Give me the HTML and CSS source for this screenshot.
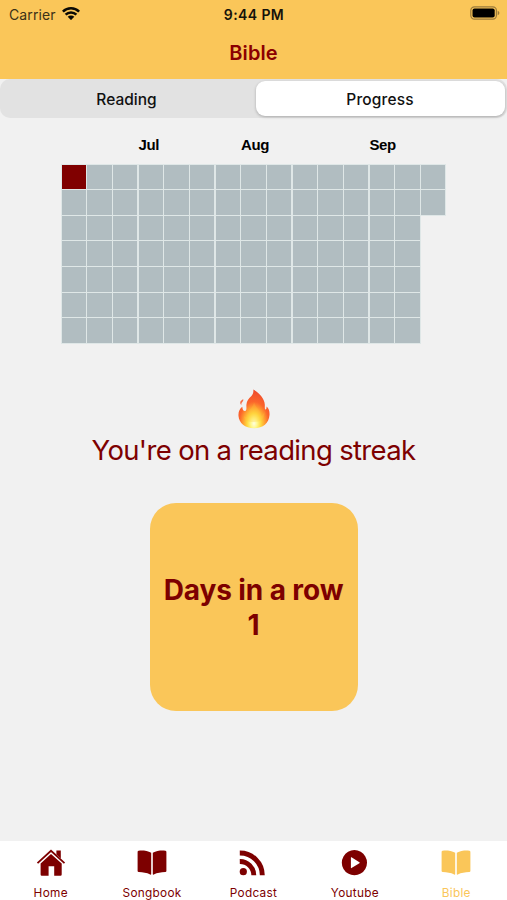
FILE: index.html
```html
<!DOCTYPE html>
<html lang="en">
<head>
    <meta charset="utf-8">
    <title>Bible</title>
    <link rel="stylesheet" href="styles.css">
</head>
<body>
    <header class="header">
        <div class="statusBar">
            <div class="carrier">
                <span class="carrierName">Carrier</span>
                <svg class="wifi" viewBox="0 0 18 13">
                    <path d="M0.9 4.6a11.6 11.6 0 0 1 16.2 0M3.6 7.6a7.7 7.7 0 0 1 10.8 0" fill="none" stroke="#0b0a05" stroke-width="2.5"/>
                    <path d="M5.7 9.8a4.7 4.7 0 0 1 6.6 0L9 13.1z" fill="#0b0a05"/>
                </svg>
            </div>
            <span class="time">9:44 PM</span>
            <svg class="battery" viewBox="0 0 30 14">
                <rect x="0.8" y="0.8" width="25.6" height="12.4" rx="3.6" fill="none" stroke="#9b7b3b" stroke-width="1.2"/>
                <rect x="2.5" y="2.5" width="22.2" height="9" rx="2" fill="#000"/>
                <path d="M27.7 4.8c2.2.8 2.2 3.6 0 4.4z" fill="#9b7b3b"/>
            </svg>
        </div>
        <h1 class="title">Bible</h1>
    </header>

    <div class="segmented">
        <div class="segment"><span class="segmentText">Reading</span></div>
        <div class="segment selected"><span class="segmentText">Progress</span></div>
    </div>

    <main class="content">
        <div class="months">
            <span class="jul">Jul</span>
            <span class="aug">Aug</span>
            <span class="sep">Sep</span>
        </div>
        <!-- one column per week, last week is partial -->
        <div class="heatmap">
            <i class="day read"></i><i class="day"></i><i class="day"></i><i class="day"></i><i class="day"></i><i class="day"></i><i class="day"></i>
            <i class="day"></i><i class="day"></i><i class="day"></i><i class="day"></i><i class="day"></i><i class="day"></i><i class="day"></i>
            <i class="day"></i><i class="day"></i><i class="day"></i><i class="day"></i><i class="day"></i><i class="day"></i><i class="day"></i>
            <i class="day"></i><i class="day"></i><i class="day"></i><i class="day"></i><i class="day"></i><i class="day"></i><i class="day"></i>
            <i class="day"></i><i class="day"></i><i class="day"></i><i class="day"></i><i class="day"></i><i class="day"></i><i class="day"></i>
            <i class="day"></i><i class="day"></i><i class="day"></i><i class="day"></i><i class="day"></i><i class="day"></i><i class="day"></i>
            <i class="day"></i><i class="day"></i><i class="day"></i><i class="day"></i><i class="day"></i><i class="day"></i><i class="day"></i>
            <i class="day"></i><i class="day"></i><i class="day"></i><i class="day"></i><i class="day"></i><i class="day"></i><i class="day"></i>
            <i class="day"></i><i class="day"></i><i class="day"></i><i class="day"></i><i class="day"></i><i class="day"></i><i class="day"></i>
            <i class="day"></i><i class="day"></i><i class="day"></i><i class="day"></i><i class="day"></i><i class="day"></i><i class="day"></i>
            <i class="day"></i><i class="day"></i><i class="day"></i><i class="day"></i><i class="day"></i><i class="day"></i><i class="day"></i>
            <i class="day"></i><i class="day"></i><i class="day"></i><i class="day"></i><i class="day"></i><i class="day"></i><i class="day"></i>
            <i class="day"></i><i class="day"></i><i class="day"></i><i class="day"></i><i class="day"></i><i class="day"></i><i class="day"></i>
            <i class="day"></i><i class="day"></i><i class="day"></i><i class="day"></i><i class="day"></i><i class="day"></i><i class="day"></i>
            <i class="day"></i><i class="day"></i>
        </div>

        <svg class="flame" viewBox="0 0 32 40">
            <defs>
                <radialGradient id="fire" gradientUnits="userSpaceOnUse" cx="16" cy="34.5" r="34" gradientTransform="translate(16 0) scale(.68 1) translate(-16 0)">
                    <stop offset="0" stop-color="#fffee0"/>
                    <stop offset="0.14" stop-color="#fff88a"/>
                    <stop offset="0.3" stop-color="#ffd83e"/>
                    <stop offset="0.46" stop-color="#ffa231"/>
                    <stop offset="0.64" stop-color="#fb652b"/>
                    <stop offset="1" stop-color="#ee482d"/>
                </radialGradient>
            </defs>
            <path d="M15.3 0.5C21 4 26.5 9 26.8 15.5C27 18 26.4 20 27.5 20.5C28.5 20.5 28.5 19 28.6 17.6C31 19.5 31.7 22.5 31.5 26C31 34 25 39.3 16 39.3C7 39.3 1 34 .5 27C.2 22.8 1.5 20 4.3 17.8C4.5 20.2 5 22 7 22C9 21.7 8.3 18.5 8.4 16C8.6 12 10.6 9.6 13.2 7.3C15 5.5 15.7 3 15.3 .5Z" fill="url(#fire)"/>
            <path d="M16 13C18 20 23 21 23 27C25 26 26 24 26.5 22C27 30 23 33 16 33C9 33 6 31 6 27C8 29 10 28 10.5 24C11 20 15.5 18 16 13Z" fill="#ffc93c" opacity=".25"/>
            <path d="M5.2 10.3C6 12.5 2.8 13.3 3.4 16.2C1.3 13.8 2.3 11.7 5.2 10.3Z" fill="#f66a42"/>
        </svg>
        <p class="streak">You're on a reading streak</p>

        <div class="card">
            <span class="cardLabel">Days in a row</span>
            <span class="cardValue">1</span>
        </div>
    </main>

    <nav class="tabBar">
        <div class="tab">
            <svg class="tabIcon" viewBox="0 0 30 28">
                <path d="M15 5L25.7 14.5V25.6Q25.7 26.8 24.5 26.8H18.2V17.2H12.6V26.8H5.8Q4.6 26.8 4.6 25.6V14.5Z"/>
                <path d="M1.5 14.1L15 1.8L28.5 14.1" fill="none" stroke="currentColor" stroke-width="1.8"/>
                <path d="M20.4 1.4H24.8V9.6L20.4 5.6Z"/>
            </svg>
            <span class="tabLabel">Home</span>
        </div>
        <div class="tab">
            <svg class="tabIcon" viewBox="0 0 30 28">
                <path d="M14.2 3.8C10.5 1.7 6 1.4 1.7 1.7Q.6 1.8.6 2.9V22Q.6 23.1 1.8 23.1C6.1 23.4 9.6 23.7 13.2 25.5Q14.2 26 14.2 25ZM15.8 3.8C19.5 1.7 24 1.4 28.3 1.7Q29.4 1.8 29.4 2.9V22Q29.4 23.1 28.2 23.1C23.9 23.4 20.4 23.7 16.8 25.5Q15.8 26 15.8 25Z"/>
            </svg>
            <span class="tabLabel">Songbook</span>
        </div>
        <div class="tab">
            <svg class="tabIcon shifted" viewBox="0 0 30 28">
                <circle cx="5.3" cy="22.7" r="3.6"/>
                <path d="M1.8 12.5A13.8 13.8 0 0 1 15.8 26.3M1.8 4A22.3 22.3 0 0 1 24.3 26.3" fill="none" stroke="currentColor" stroke-width="4.9"/>
            </svg>
            <span class="tabLabel">Podcast</span>
        </div>
        <div class="tab">
            <svg class="tabIcon" viewBox="0 0 30 28">
                <path fill-rule="evenodd" d="M14.4 1.1a12.6 12.6 0 1 0 .01 0ZM11.1 8.2Q10.9 8 10.9 8.7V18.7Q10.9 19.4 11.5 19L19.4 14.3Q20 13.8 19.4 13.3L11.5 8.3Z"/>
            </svg>
            <span class="tabLabel">Youtube</span>
        </div>
        <div class="tab active">
            <svg class="tabIcon" viewBox="0 0 30 28">
                <path d="M14.2 3.8C10.5 1.7 6 1.4 1.7 1.7Q.6 1.8.6 2.9V22Q.6 23.1 1.8 23.1C6.1 23.4 9.6 23.7 13.2 25.5Q14.2 26 14.2 25ZM15.8 3.8C19.5 1.7 24 1.4 28.3 1.7Q29.4 1.8 29.4 2.9V22Q29.4 23.1 28.2 23.1C23.9 23.4 20.4 23.7 16.8 25.5Q15.8 26 15.8 25Z"/>
            </svg>
            <span class="tabLabel">Bible</span>
        </div>
    </nav>
</body>
</html>
```
FILE: styles.css
```css
* { box-sizing: border-box; }
body {
    margin: 0;
    height: 900px;
    display: flex;
    flex-direction: column;
    overflow: hidden;
    background: #f1f1f1;
    font-family: Inter, "Liberation Sans", sans-serif;
    color: #7d0000;
}
svg { display: block; }
.header {
    height: 79px;
    background: #fac659;
}
.statusBar {
    height: 28px;
    display: grid;
    grid-template-columns: 1fr auto 1fr;
    align-items: center;
    padding: 0 8px 0 9px;
    color: #15120a;
}
.carrier {
    display: flex;
    align-items: center;
    gap: 6px;
}
.carrierName {
    font-size: 14px;
    letter-spacing: 0.1px;
    color: #3b3117;
}
.wifi {
    width: 18px;
    height: 13px;
    margin-top: -2px;
}
.time {
    font-size: 14px;
    font-weight: 600;
    letter-spacing: 0.4px;
}
.battery {
    width: 30px;
    height: 14px;
    margin: -2px -1px 0 0;
    justify-self: end;
}
.title {
    margin: 0;
    font-size: 20px;
    line-height: 50px;
    font-weight: 600;
    text-align: center;
    letter-spacing: 0.1px;
    color: #8b0000;
}
.segmented {
    height: 39px;
    display: flex;
    padding: 2px 2px 2px 0;
    background: #e2e2e2;
    border-radius: 10px;
}
.segment {
    flex: 0 0 256px;
    display: flex;
    justify-content: center;
    align-items: center;
    padding: 1px 3px 0 0;
    font-size: 15.5px;
    font-weight: 500;
    color: #111;
}
.selected {
    flex: 1;
    padding-right: 1px;
    background: #fff;
    border-radius: 9px;
    box-shadow: 0 1px 3px rgba(0, 0, 0, 0.25);
}
.selected .segmentText { letter-spacing: 0.15px; }
.content {
    flex: 1;
    display: flex;
    flex-direction: column;
    align-items: center;
}
.months {
    width: 384px;
    height: 46px;
    padding-top: 17px;
    display: grid;
    grid-template-columns: 77px 102.5px 128.5px 1fr;
    font: bold 15px/20px "Liberation Sans", sans-serif;
    letter-spacing: -0.4px;
    color: #000;
}
.jul { grid-column: 2; }
.heatmap {
    display: grid;
    grid-auto-flow: column;
    grid-template-rows: repeat(7, 24.5px);
    grid-auto-columns: 24.5px;
    gap: 1.17px;
    margin-top: 0.5px;
}
.day {
    background: #b1bdc1;
    box-shadow: 0 0 0 1px #dfe7e7;
}
.read { background: #800000; }
.flame {
    width: 32px;
    height: 40px;
    margin-top: 46px;
}
.streak {
    margin: 2px 0 0;
    font-size: 27.5px;
    line-height: 38px;
    letter-spacing: -0.66px;
}
.card {
    width: 208px;
    height: 208px;
    margin-top: 34px;
    padding-top: 2px;
    display: flex;
    flex-direction: column;
    align-items: center;
    justify-content: center;
    border-radius: 26px;
    background: #fac659;
    font-size: 28px;
    line-height: 35px;
    font-weight: 700;
    letter-spacing: -0.1px;
    white-space: nowrap;
}
.tabBar {
    height: 59px;
    display: grid;
    grid-template-columns: repeat(5, 1fr);
    background: #fff;
}
.tab {
    display: flex;
    flex-direction: column;
    align-items: center;
    padding-top: 8px;
}
.tabIcon {
    width: 30px;
    height: 28px;
    fill: currentColor;
}
.tabLabel {
    margin-top: 8px;
    font-size: 11.8px;
    line-height: 16px;
    letter-spacing: 0.3px;
}
.active { color: #fac659; }
```
